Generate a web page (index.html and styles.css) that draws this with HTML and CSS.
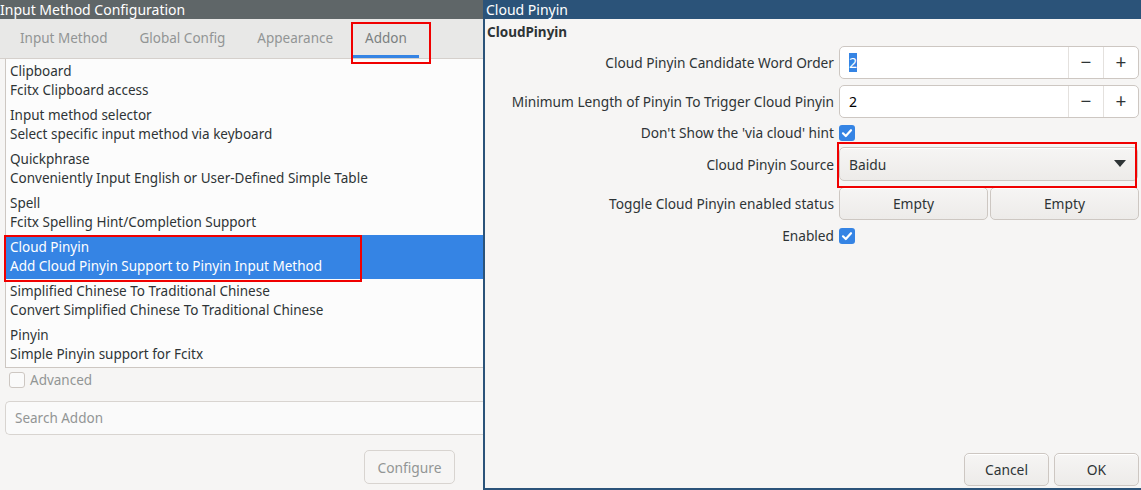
FILE: index.html
```html
<!DOCTYPE html>
<html>
<head>
<meta charset="utf-8">
<link rel="stylesheet" href="styles.css">
</head>
<body>
<div class="screen">
  <section class="win win-left">
    <header class="titlebar titlebar-gray">Input Method Configuration</header>
    <nav class="tabs">
      <span class="tab">Input Method</span>
      <span class="tab">Global Config</span>
      <span class="tab">Appearance</span>
      <span class="tab tab-active">Addon</span>
    </nav>
    <ul class="addon-list">
      <li class="addon"><span>Clipboard</span><span>Fcitx Clipboard access</span></li>
      <li class="addon"><span>Input method selector</span><span>Select specific input method via keyboard</span></li>
      <li class="addon"><span>Quickphrase</span><span>Conveniently Input English or User-Defined Simple Table</span></li>
      <li class="addon"><span>Spell</span><span>Fcitx Spelling Hint/Completion Support</span></li>
      <li class="addon addon-selected"><span>Cloud Pinyin</span><span>Add Cloud Pinyin Support to Pinyin Input Method</span></li>
      <li class="addon"><span>Simplified Chinese To Traditional Chinese</span><span>Convert Simplified Chinese To Traditional Chinese</span></li>
      <li class="addon"><span>Pinyin</span><span>Simple Pinyin support for Fcitx</span></li>
    </ul>
    <label class="advanced"><span class="check check-off"></span><span>Advanced</span></label>
    <div class="search">Search Addon</div>
    <div class="left-actions"><button class="btn btn-disabled">Configure</button></div>
    <div class="mark mark-addon"></div>
    <div class="mark mark-item"></div>
  </section>

  <section class="win win-right">
    <header class="titlebar titlebar-blue">Cloud Pinyin</header>
    <div class="dialog">
      <h1 class="group-title">CloudPinyin</h1>
      <div class="form">
        <span class="label">Cloud Pinyin Candidate Word Order</span>
        <div class="spin">
          <span class="spin-value"><span class="sel">2</span></span>
          <span class="spin-btn">&minus;</span>
          <span class="spin-btn">+</span>
        </div>

        <span class="label">Minimum Length of Pinyin To Trigger Cloud Pinyin</span>
        <div class="spin">
          <span class="spin-value">2</span>
          <span class="spin-btn">&minus;</span>
          <span class="spin-btn">+</span>
        </div>

        <span class="label label-short">Don't Show the 'via cloud' hint</span>
        <div class="check-cell"><span class="check check-on"><svg viewBox="0 0 16 16" width="16" height="16"><path d="M4 8.3 L6.8 11 L12 5.2" fill="none" stroke="#fff" stroke-width="2.2" stroke-linecap="round" stroke-linejoin="round"/></svg></span></div>

        <span class="label">Cloud Pinyin Source</span>
        <div class="combo"><span>Baidu</span><svg class="arrow" viewBox="0 0 12 8" width="12" height="8"><path d="M0 0 H12 L6 7 Z" fill="#2e3436"/></svg></div>

        <span class="label">Toggle Cloud Pinyin enabled status</span>
        <div class="pair">
          <button class="btn btn-key">Empty</button>
          <button class="btn btn-key">Empty</button>
        </div>

        <span class="label label-short">Enabled</span>
        <div class="check-cell check-cell-last"><span class="check check-on"><svg viewBox="0 0 16 16" width="16" height="16"><path d="M4 8.3 L6.8 11 L12 5.2" fill="none" stroke="#fff" stroke-width="2.2" stroke-linecap="round" stroke-linejoin="round"/></svg></span></div>
      </div>
      <div class="dialog-actions">
        <button class="btn btn-action">Cancel</button>
        <button class="btn btn-action">OK</button>
      </div>
    </div>
    <div class="mark mark-combo"></div>
  </section>
</div>
</body>
</html>
```

FILE: styles.css
```css
* { box-sizing: border-box; }
html, body { margin: 0; padding: 0; }
body {
  width: 1141px;
  height: 490px;
  overflow: hidden;
  background: #f6f5f4;
  font-family: "Noto Sans", "DejaVu Sans", sans-serif;
  font-size: 13.5px;
  color: #2e3436;
}
.screen {
  display: flex;
  width: 1141px;
  height: 490px;
}
.win {
  position: relative;
  display: flex;
  flex-direction: column;
  background: #f6f5f4;
}
.win-left {
  width: 483px;
  overflow: hidden;
}
.win-right {
  width: 658px;
  border-left: 2px solid #2b5379;
  border-bottom: 2px solid #2b5379;
}
.titlebar {
  height: 19px;
  line-height: 19px;
  color: #ffffff;
  font-size: 14px;
  white-space: nowrap;
  flex: none;
}
.titlebar-gray { background: #5f6668; padding-left: 0; }
.titlebar-blue { background: #2b5379; padding-left: 1px; }

/* tabs */
.tabs {
  height: 40px;
  flex: none;
  display: flex;
  gap: 8px;
  padding-left: 8px;
  background: #e8e8e7;
  border-bottom: 1px solid #d5d0cc;
}
.tab {
  padding: 0 12px;
  line-height: 39px;
  color: #929595;
  border-bottom: 3px solid transparent;
  white-space: nowrap;
}
.tab-active {
  color: #7b7f80;
  border-bottom-color: #3584e4;
}

/* addon list */
.addon-list {
  list-style: none;
  margin: 0 0 0 5px;
  padding: 0;
  height: 309px;
  flex: none;
  background: #fcfcfc;
  border-left: 1px solid #cdc7c2;
  border-bottom: 1px solid #cdc7c2;
}
.addon {
  height: 44px;
  padding: 3px 0 0 4px;
  display: flex;
  flex-direction: column;
  line-height: 19px;
  white-space: nowrap;
}
.addon-selected {
  background: #3584e4;
  color: #ffffff;
}

.advanced {
  display: flex;
  align-items: center;
  gap: 5px;
  height: 24px;
  padding-left: 9px;
  color: #929595;
}
.check {
  width: 16px;
  height: 16px;
  border-radius: 3px;
  display: inline-flex;
  flex: none;
}
.check-off {
  border: 1px solid #cdc7c2;
  background: #fafafa;
}
.check-on {
  background: #3584e4;
}

.search {
  margin: 9px 0 0 5px;
  height: 34px;
  line-height: 32px;
  padding-left: 9px;
  border: 1px solid #d8d4d0;
  border-right: none;
  border-radius: 5px 0 0 5px;
  background: #fafafa;
  color: #929595;
}
.left-actions {
  display: flex;
  justify-content: flex-end;
  padding: 15px 28px 0 0;
}

/* buttons */
.btn {
  font-family: inherit;
  font-size: 13.8px;
  height: 34px;
  padding: 0 12px;
  border: 1px solid #cdc7c2;
  border-radius: 5px;
  background: linear-gradient(#f6f5f4, #edebe9);
  color: #2e3436;
  box-shadow: inset 0 1px #ffffff;
}
.btn-disabled {
  width: 91px;
  color: #929595;
  background: #f6f5f4;
  border-color: #d8d4d0;
  box-shadow: none;
}

/* right dialog */
.dialog {
  flex: 1;
  display: flex;
  flex-direction: column;
  padding: 0 2px 2px 0;
}
.group-title {
  margin: 0;
  font-size: 13.5px;
  font-weight: bold;
  line-height: 26px;
  padding: 0 0 0 2px;
  height: 27px;
}
.form {
  display: grid;
  grid-template-columns: 1fr 300px;
  column-gap: 5px;
  row-gap: 6px;
  align-items: center;
}
.label {
  text-align: right;
  white-space: nowrap;
  font-size: 13.7px;
  line-height: 17px;
}
.spin {
  height: 33px;
  display: flex;
  border: 1px solid #cdc7c2;
  border-radius: 5px;
  background: #ffffff;
}
.spin-value {
  flex: 1;
  padding-left: 9px;
  line-height: 31px;
  font-size: 14px;
  color: #000000;
}
.sel {
  background: #3584e4;
  color: #ffffff;
}
.spin-btn {
  width: 35px;
  border-left: 1px solid #e4e1de;
  text-align: center;
  line-height: 30px;
  font-size: 19px;
  color: #2e3436;
}
.check-cell {
  height: 17px;
  display: flex;
  align-items: center;
}
.check-cell-last {
  margin-top: 1px;
}
.combo {
  height: 34px;
  display: flex;
  align-items: center;
  justify-content: space-between;
  padding: 0 11px 0 9px;
  border: 1px solid #cdc7c2;
  border-radius: 5px;
  background: linear-gradient(#f6f5f4, #edebe9);
  box-shadow: inset 0 1px #ffffff;
  margin-right: 1px;
  font-size: 13.8px;
}
.pair {
  display: grid;
  grid-template-columns: 1fr 1fr;
  gap: 2px;
}
.btn-key {
  height: 33px;
  width: 100%;
}
.dialog-actions {
  margin-top: auto;
  display: flex;
  justify-content: flex-end;
  gap: 5px;
}
.btn-action {
  width: 85px;
  height: 33px;
}

/* red annotation marks */
.mark {
  position: absolute;
  border: 2px solid #f00000;
  pointer-events: none;
}
.mark-addon { left: 351px; top: 22px; width: 80px; height: 42px; }
.mark-item { left: 4px; top: 235px; width: 358px; height: 47px; }
.mark-combo { left: 352px; top: 142px; width: 300px; height: 46px; }
```
